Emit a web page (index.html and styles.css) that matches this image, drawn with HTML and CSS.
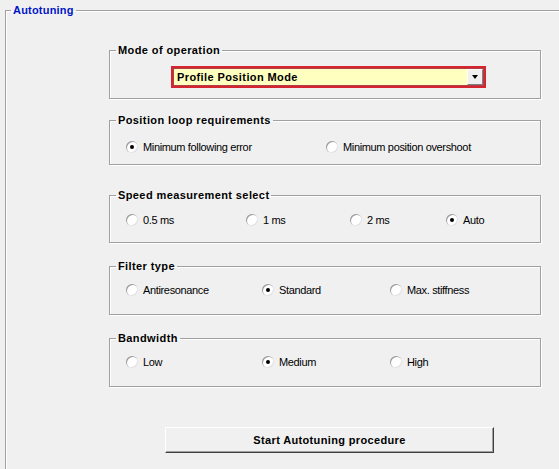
FILE: index.html
```html
<!DOCTYPE html>
<html>
<head>
<meta charset="utf-8">
<link rel="stylesheet" href="styles.css">
</head>
<body>
<fieldset class="outer">
  <legend class="outer-legend">Autotuning</legend>
  <div class="groups">
    <fieldset class="group g-mode">
      <legend>Mode of operation</legend>
      <div class="select">
        <span class="select-text">Profile Position Mode</span>
        <span class="drop"><span class="tri"></span></span>
      </div>
    </fieldset>
    <fieldset class="group g-pos">
      <legend>Position loop requirements</legend>
      <div class="row cols-pos">
        <label class="opt"><span class="radio on"></span>Minimum following error</label>
        <label class="opt"><span class="radio"></span>Minimum position overshoot</label>
      </div>
    </fieldset>
    <fieldset class="group g-speed">
      <legend>Speed measurement select</legend>
      <div class="row cols-speed">
        <label class="opt"><span class="radio"></span>0.5 ms</label>
        <label class="opt"><span class="radio"></span>1 ms</label>
        <label class="opt"><span class="radio"></span>2 ms</label>
        <label class="opt"><span class="radio on"></span>Auto</label>
      </div>
    </fieldset>
    <fieldset class="group g-filter">
      <legend>Filter type</legend>
      <div class="row cols-3">
        <label class="opt"><span class="radio"></span>Antiresonance</label>
        <label class="opt"><span class="radio on"></span>Standard</label>
        <label class="opt"><span class="radio"></span>Max. stiffness</label>
      </div>
    </fieldset>
    <fieldset class="group g-band">
      <legend>Bandwidth</legend>
      <div class="row cols-3">
        <label class="opt"><span class="radio"></span>Low</label>
        <label class="opt"><span class="radio on"></span>Medium</label>
        <label class="opt"><span class="radio"></span>High</label>
      </div>
    </fieldset>
  </div>
  <div class="actions">
    <button class="btn">Start Autotuning procedure</button>
  </div>
</fieldset>
</body>
</html>
```
FILE: styles.css
```css
html, body {
  margin: 0;
  padding: 0;
  background: #f0f0f0;
  overflow: hidden;
  width: 559px;
  height: 469px;
}
body {
  font-family: "Liberation Sans", Arial, sans-serif;
  font-size: 11px;
  color: #000;
}
fieldset {
  margin: 0;
  padding: 0;
  box-sizing: border-box;
  border: 1px solid #a0a0a0;
  box-shadow: inset 1px 1px 0 #fff, 1px 1px 0 #fff;
  min-width: 0;
}
legend {
  padding: 0 2px;
  line-height: 14px;
  font-weight: bold;
  font-size: 11px;
  letter-spacing: 0.4px;
}
.outer {
  margin: 3px 0 0 5px;
  width: 554px;
  height: 466px;
  border-right: none;
  border-bottom: none;
  box-shadow: inset 1px 1px 0 #fff;
}
.outer-legend {
  margin-left: 5px;
  color: #0014c8;
  letter-spacing: 0.2px;
}
.groups {
  display: flex;
  flex-direction: column;
  padding-left: 103px;
  margin-top: 26px;
}
.group {
  width: 432px;
}
.group legend {
  margin-left: 6px;
}
.g-mode { height: 56px; }
.g-pos { height: 52px; margin-top: 14px; }
.g-speed { height: 55px; margin-top: 23px; }
.g-filter { height: 56px; margin-top: 16px; }
.g-band { height: 56px; margin-top: 16px; }

.select {
  margin: 9px 0 0 61px;
  width: 315px;
  height: 22px;
  box-sizing: border-box;
  border: 2px solid #d42530;
  box-shadow: inset 0 0 0 1px #b04048;
  background: #ffffc0;
  display: flex;
  align-items: center;
  justify-content: space-between;
}
.select-text {
  font-weight: bold;
  padding-left: 4px;
  line-height: 14px;
  letter-spacing: 0.4px;
}
.drop {
  width: 16px;
  height: 16px;
  margin-right: 1px;
  box-sizing: border-box;
  background: #f0f0f0;
  border-top: 1px solid #fff;
  border-left: 1px solid #fff;
  border-right: 1px solid #808080;
  border-bottom: 1px solid #808080;
  display: flex;
  align-items: center;
  justify-content: center;
}
.tri {
  width: 0;
  height: 0;
  border-left: 3.5px solid transparent;
  border-right: 3.5px solid transparent;
  border-top: 4px solid #000;
}

.row {
  display: grid;
  padding-left: 16px;
  line-height: 14px;
}
.g-pos .row { padding-top: 13px; }
.g-speed .row { padding-top: 11px; }
.g-filter .row, .g-band .row { padding-top: 10px; }
.cols-pos { grid-template-columns: 200px 1fr; }
.cols-speed { grid-template-columns: 120px 104px 96px 1fr; }
.cols-3 { grid-template-columns: 136px 128px 1fr; }

.opt {
  display: flex;
  align-items: center;
  white-space: nowrap;
  letter-spacing: -0.35px;
}
.radio {
  position: relative;
  width: 12px;
  height: 12px;
  border-radius: 50%;
  background: #fff;
  box-shadow: inset 1px 1px 0 #9a9a9a, inset -1px -1px 0 #e2e2e2;
  margin-right: 5px;
  flex: none;
}
.radio.on::after {
  content: "";
  position: absolute;
  left: 4px;
  top: 4px;
  width: 4px;
  height: 4px;
  border-radius: 50%;
  background: #000;
}

.actions {
  padding-left: 159px;
  margin-top: 40px;
}
.btn {
  width: 329px;
  height: 26px;
  box-sizing: border-box;
  background: #f0f0f0;
  font-family: "Liberation Sans", Arial, sans-serif;
  font-size: 11px;
  font-weight: bold;
  letter-spacing: 0.35px;
  color: #000;
  border-top: 1px solid #fff;
  border-left: 1px solid #fff;
  border-right: 1px solid #404040;
  border-bottom: 1px solid #404040;
  box-shadow: inset -1px -1px 0 #a0a0a0;
  padding: 0;
}
```
